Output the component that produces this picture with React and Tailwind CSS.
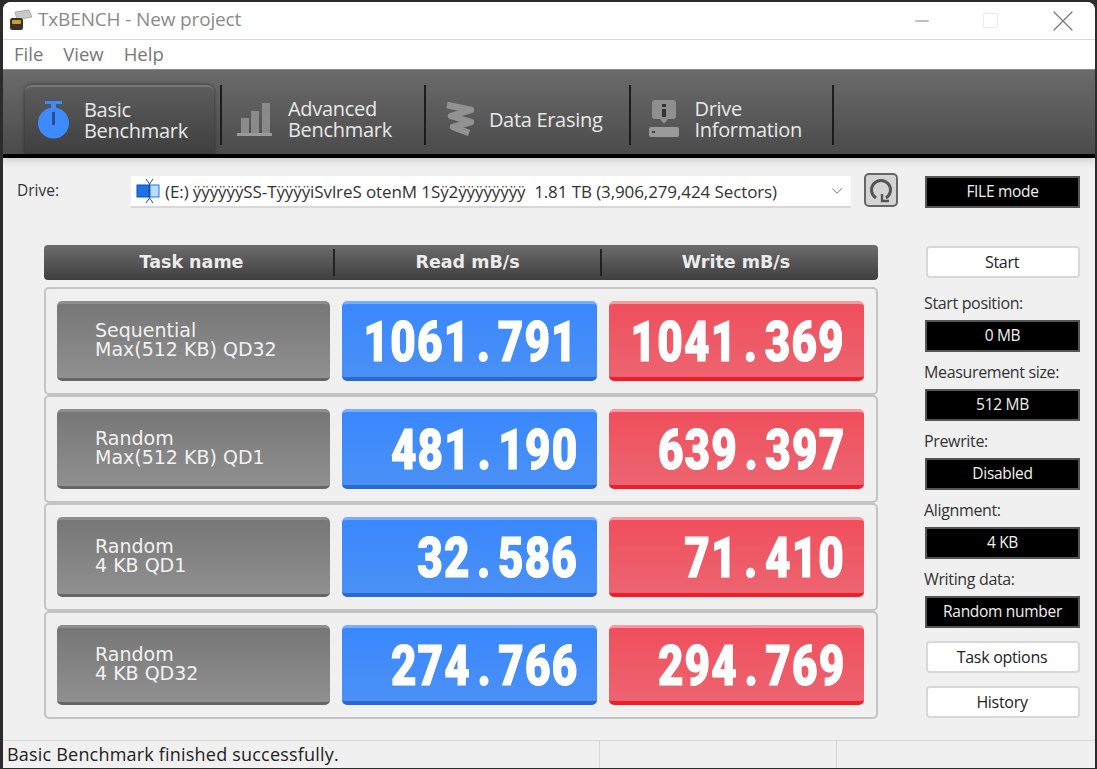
import React from 'react';
import { ChevronDown, X, Minus, Square } from 'lucide-react';

const uiFont = "font-['Open_Sans','Noto_Sans',sans-serif]";
const wideFont = "font-['DejaVu_Sans',sans-serif]";

const rows = [
  { a: 'Sequential', b: 'Max(512 KB) QD32', read: '1061.791', write: '1041.369' },
  { a: 'Random', b: 'Max(512 KB) QD1', read: '481.190', write: '639.397' },
  { a: 'Random', b: '4 KB QD1', read: '32.586', write: '71.410' },
  { a: 'Random', b: '4 KB QD32', read: '274.766', write: '294.769' },
];

const settings = [
  ['Start position:', '0 MB'],
  ['Measurement size:', '512 MB'],
  ['Prewrite:', 'Disabled'],
  ['Alignment:', '4 KB'],
  ['Writing data:', 'Random number'],
];

function TimerIcon() {
  return (
    <svg width="34" height="40" viewBox="0 0 34 40">
      <rect x="9" y="1" width="17" height="3" fill="#3d8bff" />
      <rect x="15" y="4" width="5" height="6" fill="#3d8bff" />
      <circle cx="17.5" cy="23" r="15.5" fill="#3d8bff" />
      <rect x="16" y="12" width="3" height="13" fill="#2a4f8a" />
    </svg>
  );
}

function BarsIcon() {
  return (
    <svg width="36" height="36" viewBox="0 0 36 36">
      <rect x="4" y="17" width="8" height="16" fill="#8a8a8a" />
      <rect x="14" y="10" width="8" height="23" fill="#8a8a8a" />
      <rect x="25" y="2" width="8" height="31" fill="#8a8a8a" />
      <rect x="0" y="32" width="35" height="3" fill="#9a9a9a" />
    </svg>
  );
}

function EraseIcon() {
  return (
    <svg width="30" height="36" viewBox="0 0 30 36">
      <path d="M3 4 L27 9 L7 15 L27 21 L9 26 L25 32" fill="none" stroke="#929292" strokeWidth="6.5" strokeLinejoin="round" />
    </svg>
  );
}

function InfoIcon() {
  return (
    <svg width="30" height="38" viewBox="0 0 30 38">
      <path d="M6 0 H24 Q27 0 27 3 V16 Q27 19 24 19 H19 L15 24 L11 19 H6 Q3 19 3 16 V3 Q3 0 6 0 Z" fill="#8f8f8f" />
      <rect x="13" y="4" width="4" height="3" fill="#333" />
      <rect x="13" y="9" width="4" height="8" fill="#333" />
      <rect x="0" y="27" width="30" height="10" rx="2" fill="#9a9a9a" />
      <rect x="3" y="31" width="3" height="2" fill="#444" />
    </svg>
  );
}

function DriveIcon() {
  return (
    <svg width="25" height="28" viewBox="0 0 25 28">
      <rect x="1" y="8" width="12" height="12" fill="#1a73e8" stroke="#0f4fa8" />
      <rect x="14" y="8" width="9" height="12" fill="#bcdcf7" stroke="#1a73e8" />
      <path d="M10 2 L13.5 7 L17 2 M13.5 7 V21 M10 26 L13.5 21 L17 26" fill="none" stroke="#1c4f9c" strokeWidth="1" />
    </svg>
  );
}

function AppIcon() {
  return (
    <svg width="24" height="24" viewBox="0 0 24 24">
      <path d="M6 3 L20 1 L23 8 L8 11 Z" fill="#c9c9c9" stroke="#8a8a8a" strokeWidth="0.6" />
      <rect x="1" y="9" width="13" height="12" rx="2.5" fill="#3a3228" />
      <rect x="3" y="11" width="9" height="4" rx="1" fill="#d29a2a" />
    </svg>
  );
}

function ToolbarTab({ active, icon, iconBox, lines }) {
  return (
    <div
      className={`flex h-[68px] shrink-0 items-center ${
        active
          ? 'w-[189px] rounded-t-[7px] border-t-2 border-[#777] bg-gradient-to-b from-[#5c5c5c] to-[#3f3f3f] shadow-[0_0_4px_rgba(0,0,0,0.5)]'
          : ''
      }`}
    >
      <div className={`flex shrink-0 ${iconBox}`}>{icon}</div>
      <div className={`text-[20px] leading-[21px] tracking-[-0.3px] text-[#e8e8e8] ${uiFont}`}>
        {lines.map((l) => (
          <div key={l}>{l}</div>
        ))}
      </div>
    </div>
  );
}

function ToolSep({ className }) {
  return <div className={`h-[60px] w-[2px] shrink-0 bg-[#1c1c1c] ${className}`} />;
}

function ScoreTile({ value, tone }) {
  const tones = {
    blue: 'border-t-[#79adff] border-b-[#2a6ad0] bg-gradient-to-b from-[#3a88ff] to-[#4a90f5]',
    red: 'border-t-[#f79aa2] border-b-[#ec1f2b] bg-gradient-to-b from-[#f04e5c] to-[#ec6470]',
  };
  const [whole, frac] = value.split('.');
  return (
    <div className={`flex h-[80px] w-[255px] shrink-0 items-center justify-end rounded-[5px] border-t-[3px] border-b-[4px] pr-[19px] pt-[3px] ${tones[tone]}`}>
      <span className="origin-right scale-x-[0.8] whitespace-nowrap font-['Roboto',sans-serif] text-[55px] font-black leading-none tracking-[1.5px] text-white [-webkit-text-stroke:1.2px_white]">
        {whole}
        <span className="px-[8px]">.</span>
        {frac}
      </span>
    </div>
  );
}

function ResultRow({ row }) {
  return (
    <div className="flex h-[108px] items-center gap-3 rounded-[5px] border-2 border-[#c4c4c4] pl-[11px]">
      <div className={`flex h-[80px] w-[273px] shrink-0 flex-col justify-center rounded-[5px] border-t-[3px] border-b-[3px] border-t-[#8e8e8e] border-b-[#666] bg-gradient-to-b from-[#777] to-[#909090] pb-[2px] pl-[38px] text-[19px] leading-[19px] text-[#f2f2f2] ${wideFont}`}>
        <div>{row.a}</div>
        <div>{row.b}</div>
      </div>
      <ScoreTile value={row.read} tone="blue" />
      <ScoreTile value={row.write} tone="red" />
    </div>
  );
}

function BlackField({ children, className = '' }) {
  return (
    <div className={`flex items-center justify-center border-2 border-[#555] bg-black text-[15.5px] tracking-[-0.3px] text-[#f0f0f0] ${uiFont} ${className}`}>
      {children}
    </div>
  );
}

function SideButton({ children, className = '' }) {
  return (
    <div className={`ml-px flex h-[32px] items-center justify-center rounded-[4px] border-2 border-[#d8d8d8] bg-white pr-[2px] text-[16px] tracking-[-0.3px] text-[#222] ${uiFont} ${className}`}>
      {children}
    </div>
  );
}

export default function App() {
  return (
    <div className="h-[769px] w-[1097px] overflow-hidden bg-[#2b2b2b] pl-[3px] pr-[2px] pt-[2px]">
      <div className="flex h-[766px] flex-col overflow-hidden rounded-t-[8px] bg-[#f0f0f0]">
        {/* title bar */}
        <div className="flex h-[38px] shrink-0 items-center border-b border-[#d9d9d9] bg-white pl-[6px]">
          <AppIcon />
          <span className={`mb-[3px] ml-[5px] text-[19px] tracking-[-0.15px] text-[#8a8a8a] ${uiFont}`}>TxBENCH - New project</span>
          <div className="ml-auto flex items-center text-[#777]">
            <Minus className="mr-[48px] h-[22px] w-[22px]" strokeWidth={1} />
            <Square className="mr-[45px] h-[19px] w-[19px] text-[#e2e2e2]" strokeWidth={1} />
            <X className="mr-[14px] h-[36px] w-[36px]" strokeWidth={0.8} />
          </div>
        </div>

        {/* menu */}
        <div className={`flex h-[29px] shrink-0 items-center gap-[20px] bg-white pb-[2px] pl-[11px] text-[18.5px] text-[#777] ${uiFont}`}>
          <span>File</span>
          <span>View</span>
          <span>Help</span>
        </div>

        {/* toolbar */}
        <div className="flex h-[89px] shrink-0 items-end border-b-[4px] border-t border-b-black border-t-[#888] bg-gradient-to-b from-[#6b6b6b] to-[#4b4b4b] pb-[1px] pl-[22px] shadow-[0_4px_6px_rgba(0,0,0,0.12)]">
          <ToolbarTab active icon={<TimerIcon />} iconBox="w-[59px] pl-[11px]" lines={['Basic', 'Benchmark']} />
          <ToolSep className="mb-[8px] ml-[6px]" />
          <ToolbarTab icon={<BarsIcon />} iconBox="w-[66px] pl-[15px]" lines={['Advanced', 'Benchmark']} />
          <ToolSep className="mb-[8px] ml-[32px]" />
          <ToolbarTab icon={<EraseIcon />} iconBox="w-[63px] pl-[18px]" lines={['Data Erasing']} />
          <ToolSep className="mb-[8px] ml-[27px]" />
          <ToolbarTab icon={<InfoIcon />} iconBox="w-[63px] pl-[18px]" lines={['Drive', 'Information']} />
          <ToolSep className="mb-[8px] ml-[30px]" />
        </div>

        {/* main */}
        <div className="flex min-h-0 flex-1 pl-[41px]">
          <div className="w-[834px] shrink-0">
            <div className="relative h-[87px]">
              <span className={`absolute left-[-27px] top-[21px] text-[15.5px] text-[#333] ${uiFont}`}>Drive:</span>
              <div className="absolute left-[87px] top-[18px] flex h-[32px] w-[720px] items-center border-b-2 border-[#d8d8d8] bg-white pl-[5px] pr-[3px]">
                <DriveIcon />
                <span className={`ml-[4px] whitespace-pre pt-[2px] text-[17px] tracking-[-0.1px] text-[#333] ${uiFont}`}>(E:) ÿÿÿÿÿÿSS-TÿÿÿÿiSvlreS otenM 1Sÿ2ÿÿÿÿÿÿÿÿ  1.81 TB (3,906,279,424 Sectors)</span>
                <ChevronDown className="ml-auto mr-[2px] h-[18px] w-[18px] text-[#666]" strokeWidth={1.2} />
              </div>
              <div className="absolute left-[820px] top-[15px] flex h-[34px] w-[34px] items-center justify-center rounded-[5px] border-2 border-[#666] bg-[#d4d4d4]">
                <svg width="24" height="26" viewBox="0 0 24 26">
                  <path d="M7 21 A9.5 9.5 0 1 1 17 21" fill="none" stroke="#555" strokeWidth="3" />
                  <path d="M13 17 L13 24 L20 24" fill="none" stroke="#555" strokeWidth="2.4" />
                </svg>
              </div>
            </div>

            <div className={`grid h-[35px] grid-cols-[291px_267px_276px] items-center rounded-[4px] bg-gradient-to-b from-[#6d6d6d] to-[#3f3f3f] text-[#ececec] ${wideFont}`}>
              <div className="flex h-[27px] items-center justify-center border-r-2 border-[#222] pl-[6px] text-[17.5px] font-semibold">Task name</div>
              <div className="flex h-[27px] items-center justify-center border-r-2 border-[#222] text-[17.5px] font-semibold">Read mB/s</div>
              <div className="flex h-[27px] items-center justify-center pr-[8px] text-[17.5px] font-semibold">Write mB/s</div>
            </div>

            <div className="mt-[7px] flex flex-col">
              {rows.map((row, i) => (
                <ResultRow key={i} row={row} />
              ))}
            </div>
          </div>

          {/* right column */}
          <div className="ml-[47px] w-[155px] shrink-0 pt-[18px]">
            <BlackField className="h-[32px]">FILE mode</BlackField>
            <SideButton className="mt-[38px]">Start</SideButton>
            <div className="mt-[10px] flex flex-col">
              {settings.map(([label, value]) => (
                <div key={label} className="mb-[5px]">
                  <div className={`-ml-px h-[32px] pt-[3px] text-[16px] leading-[24px] tracking-[-0.35px] text-[#333] ${uiFont}`}>{label}</div>
                  <BlackField className="h-[32px]">{value}</BlackField>
                </div>
              ))}
            </div>
            <SideButton className="mt-[8px]">Task options</SideButton>
            <SideButton className="mt-[13px]">History</SideButton>
          </div>
        </div>

        {/* status bar */}
        <div className={`flex h-[28px] shrink-0 items-center border-t border-[#d6d6d6] bg-[#f0f0f0] text-[18px] tracking-[0.2px] text-[#222] ${uiFont}`}>
          <div className="flex h-full w-[597px] items-center border-r border-[#d6d6d6] pl-[4px]">Basic Benchmark finished successfully.</div>
          <div className="h-full w-[237px] border-r border-[#d6d6d6]" />
        </div>
      </div>
    </div>
  );
}
